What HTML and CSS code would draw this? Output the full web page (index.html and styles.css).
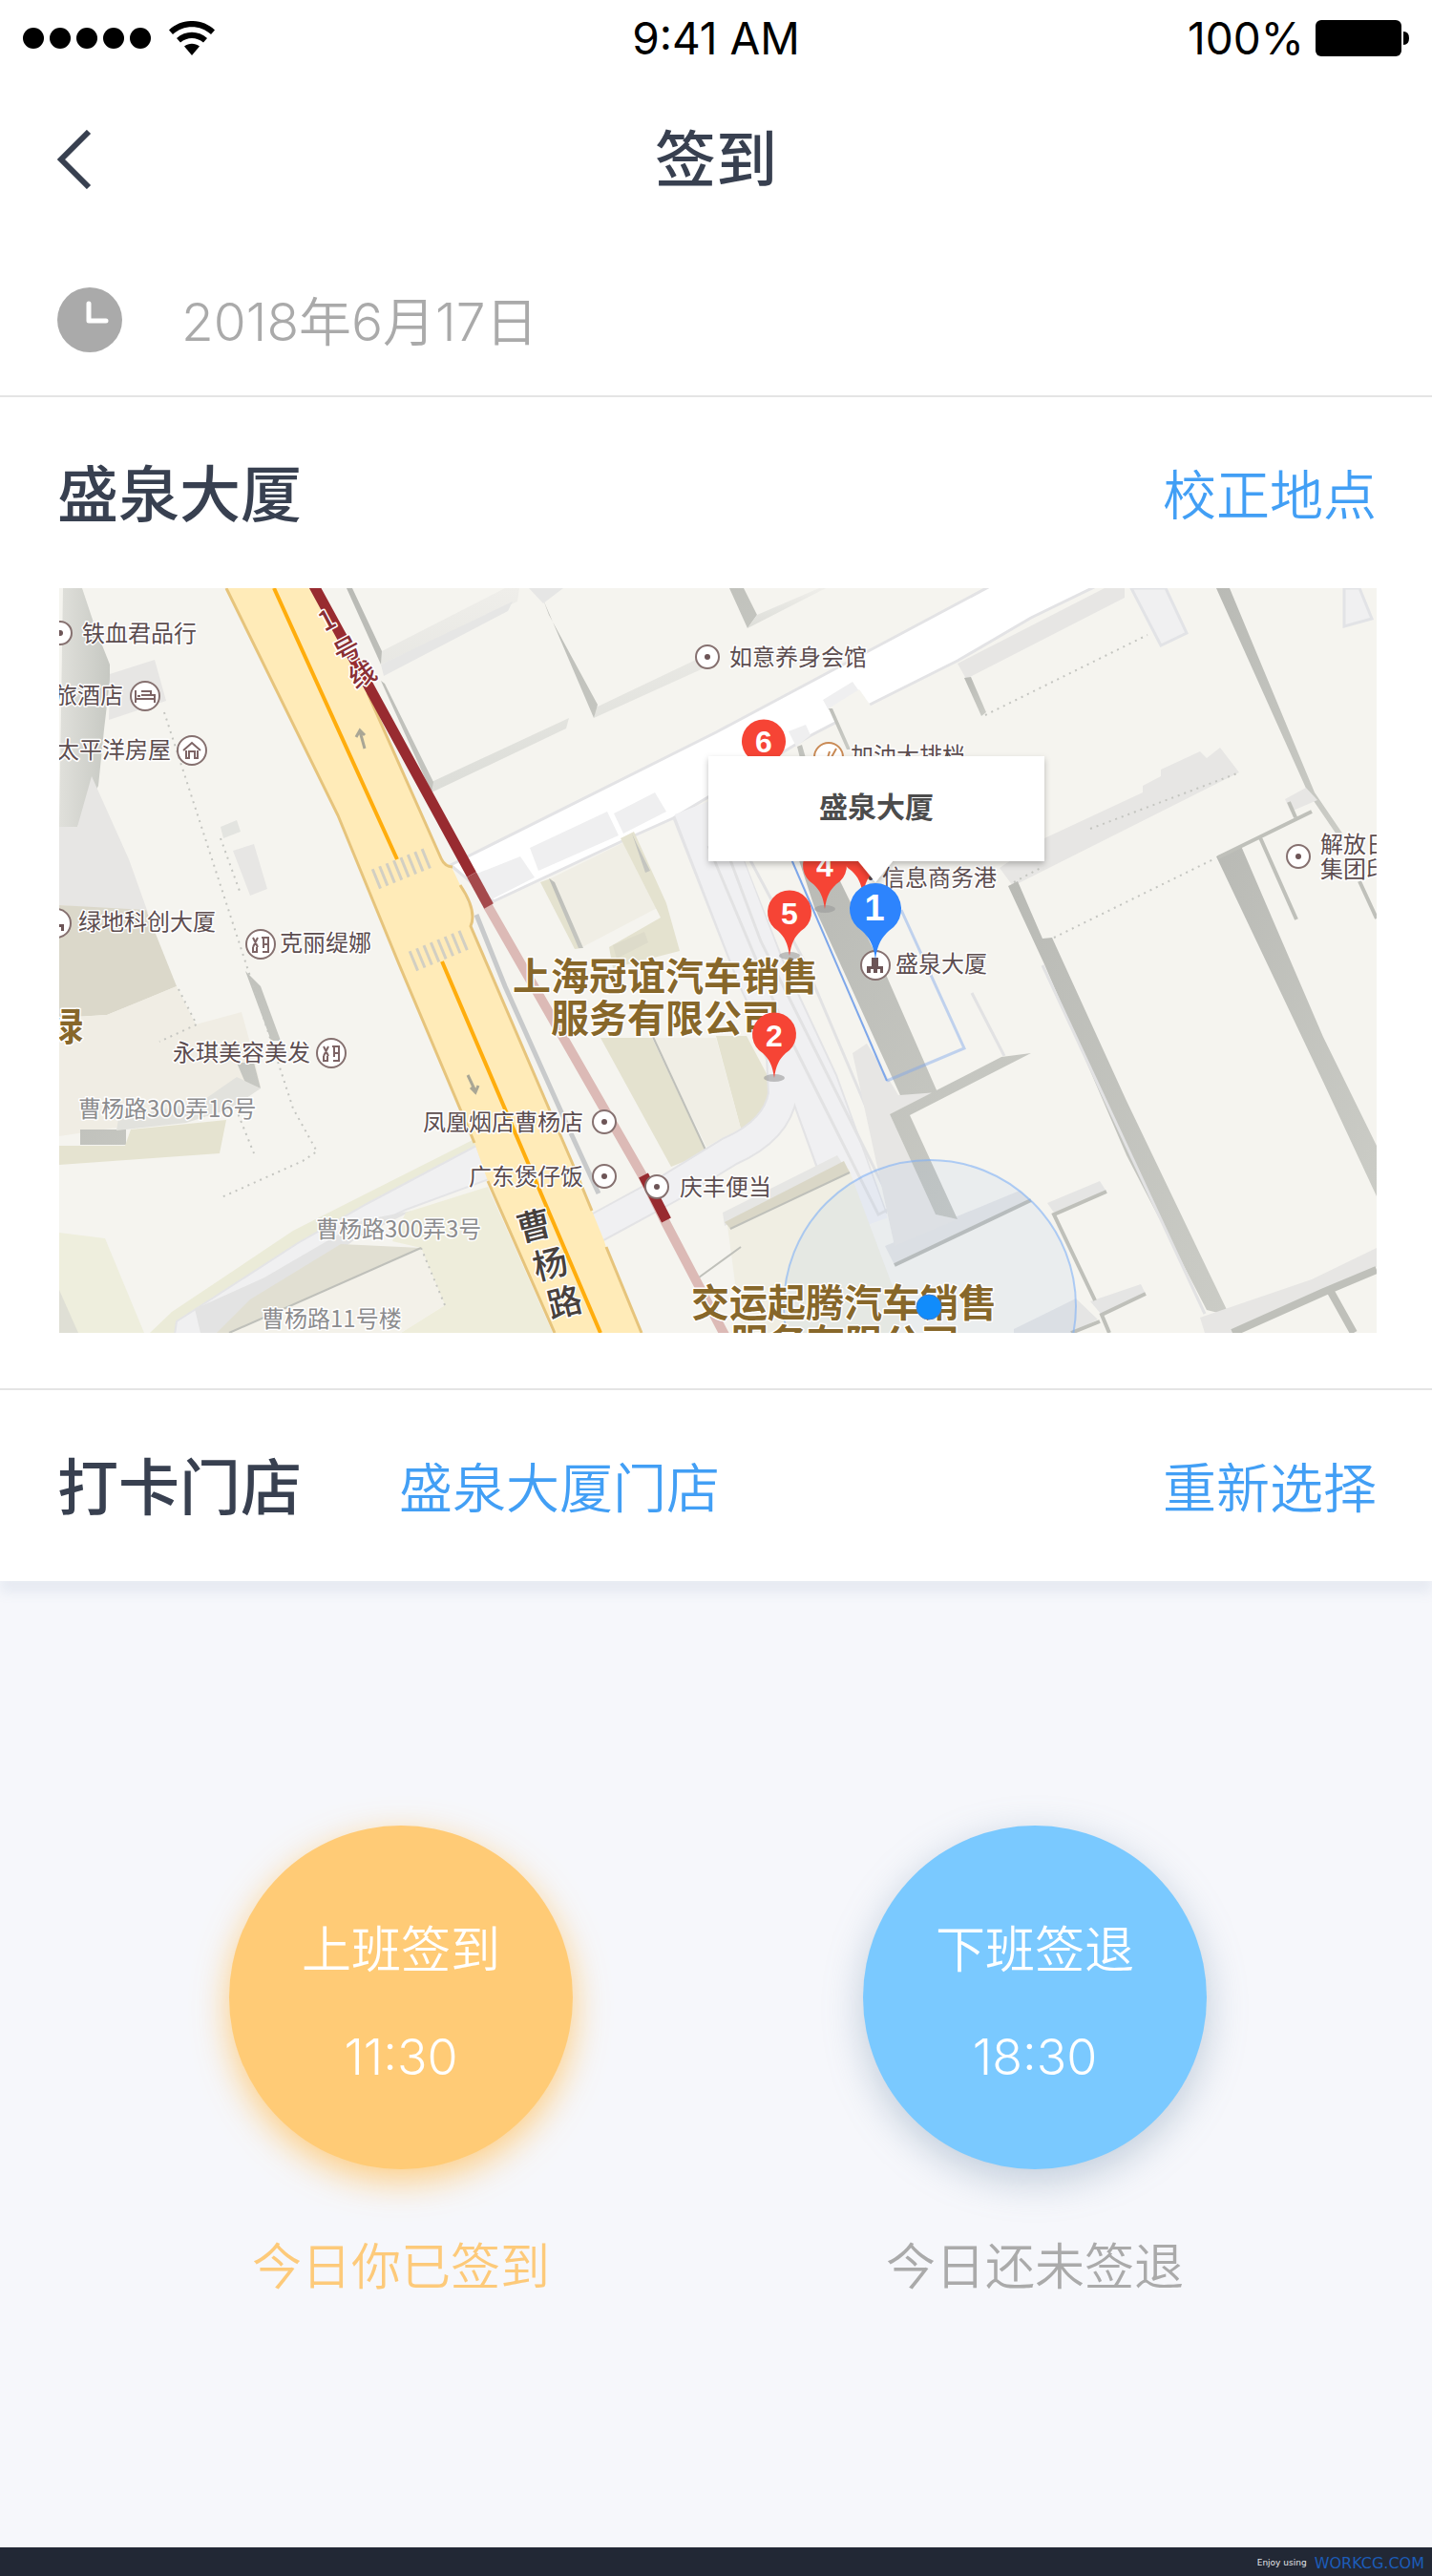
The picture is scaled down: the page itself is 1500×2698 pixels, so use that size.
FILE: index.html
```
<!DOCTYPE html>
<html lang="zh-CN">
<head>
    <meta charset="UTF-8">
    <meta name="viewport" content="width=device-width, initial-scale=1.0">
    <title>签到</title>
    <link rel="stylesheet" href="styles.css">
</head>
<body>

    <!-- Status bar -->
    <div class="status-bar">
        <div class="status-left">
            <span class="signal"><i></i><i></i><i></i><i></i><i></i></span>
            <svg class="wifi" viewBox="0 0 48 36" aria-hidden="true">
                <path d="M0 9.5 C13 -3.2 35 -3.2 48 9.5 L44 14 C33 3.600 15 3.600 4 14 Z"/>
                <path d="M8 18 C17 9.800 31 9.800 40 18 L36 22.500 C29 16.500 19 16.500 12 22.500 Z"/>
                <path d="M16 26.500 C21 22.800 27 22.800 32 26.500 L24 36 Z"/>
            </svg>
        </div>
        <span class="status-time">9:41 AM</span>
        <div class="status-right">
            <span>100%</span>
            <svg class="battery" viewBox="0 0 98 38" aria-hidden="true">
                <rect width="90" height="38" rx="6"/>
                <path d="M92 12 Q98 12 98 19 Q98 26 92 26 Z"/>
            </svg>
        </div>
    </div>

    <header class="nav-bar">
        <button type="button" class="back" aria-label="返回">
            <svg viewBox="0 0 36 62" aria-hidden="true"><path d="M33 2 L4 31 L33 60"/></svg>
        </button>
        <h1>签到</h1>
    </header>

    <main>
        <div class="card">
            <div class="date-row">
                <svg class="clock" viewBox="0 0 68 68" aria-hidden="true">
                    <circle cx="34" cy="34" r="34"/>
                    <path d="M33 17 V35 H51"/>
                </svg>
                <time datetime="2018-06-17">2018年6月17日</time>
            </div>

            <section class="location">
                <div class="row">
                    <h2>盛泉大厦</h2>
                    <a href="#map">校正地点</a>
                </div>

                <svg id="map" class="map" viewBox="0 0 1380 780" role="img" aria-label="地图">
                    <defs>
                        <linearGradient id="shade" x1="0" y1="0" x2="1" y2="0">
                            <stop offset="0" stop-color="#e0e0db"/>
                            <stop offset="1" stop-color="#c6c8c2"/>
                        </linearGradient>
                        <linearGradient id="wall" x1="0" y1="0" x2="1" y2="1">
                            <stop offset="0" stop-color="#b9bab5"/>
                            <stop offset="1" stop-color="#cbccc6"/>
                        </linearGradient>
                        <linearGradient id="soft" x1="0" y1="0" x2="0" y2="1">
                            <stop offset="0" stop-color="#efeeea"/>
                            <stop offset="1" stop-color="#dcddd8"/>
                        </linearGradient>
                        <filter id="drop" x="-10%" y="-10%" width="120%" height="130%">
                            <feDropShadow dx="0" dy="3" stdDeviation="3" flood-opacity=".25"/>
                        </filter>
                        <g id="poi">
                            <circle r="12" class="ring"/>
                            <circle r="3" fill="#6d5557"/>
                        </g>
                        <g id="salon">
                            <circle r="15" class="ring"/>
                            <path class="glyph" d="M-8 -7 L-3 3 M-3 -7 L-8 3 M-8 3 V8 H-4 V3 M1 -7 H8 V8 H2 M2 0 H8 M3 -7 V4"/>
                        </g>
                        <g id="building">
                            <circle r="15" class="ring"/>
                            <path fill="#6d5557" d="M-9 8 V1 H-4 V-8 H3 V1 H8 V8 H5 V4 H2 V8 H-2 V4 H-5 V8 Z"/>
                        </g>
                        <path id="pin" d="M0 46 C-2 32 -5 27 -12 20 A23 23 0 1 1 12 20 C5 27 2 32 0 46 Z"/>
                    </defs>

                    <rect width="1380" height="780" fill="#f5f4ef"/>

                    <!-- West blocks -->
                    <path fill="url(#shade)" d="M4 0 H24 L38 42 L53 80 V97 L47 148 L41 207 L19 250 H0 Z"/>
                    <path fill="#e7e6e4" d="M53 90 L100 75 L112 118 L52 138 Z M0 250 H19 L34 197 L73 284 L93 340 L0 332 Z M182 275 L204 268 L218 315 L200 322 Z"/>
                    <path fill="#e3e4e0" d="M169 250 L186 243 L190 255 L172 262 Z"/>
                    <path fill="#dbd8ca" d="M0 332 L91 337 L123 417 L82 434 L50 447 L0 450 Z"/>
                    <path fill="#f0ede4" d="M0 450 L50 447 L123 417 L143 457 L191 444 L204 491 L211 522 L180 547 L0 574 Z"/>
                    <path fill="url(#wall)" d="M195 401 L211 417 L232 474 H222 Z M186 497 H204 L211 524 L195 518 Z M22 567 H70 V583 H22 Z"/>
                    <path fill="#e2e2dd" d="M211 524 L180 545 L133 560 L60 568 L62 556 L150 537 L186 512 Z"/>
                    <path fill="#e5e3d0" d="M0 584 H69 L75 567 L175 557 L168 592 L0 604 Z"/>
                    <path fill="#eeeedd" d="M0 675 L48 681 L89 780 H0 Z"/>
                    <path fill="#dfdfd5" d="M0 735 L20 780 H0 Z"/>
                    <path class="dots" d="M110 130 L245 545 L270 590 L255 600 L170 638 M169 262 L190 320 M125 420 L144 457 L105 475 M185 545 L204 592"/>

                    <!-- Lane to the south-west -->
                    <path fill="#ebebd8" d="M435 577 L310 640 L245 673 L118 758 L95 780 H140 L440 600 Z"/>
                    <path fill="#f0f0f1" stroke="#e4e4e6" stroke-width="2" d="M437 584 L322 645 L250 686 L123 768 L121 782 H165 L214 734 L318 672 L363 651 L450 619 Z"/>
                    <path fill="#e3e3e3" d="M215 722 L318 662 L370 652 L310 682 L180 780 H148 L142 755 Z"/>
                    <path fill="#eeeddb" d="M449 627 L363 654 L349 684 L379 691 L404 751 L358 780 H517 Z"/>
                    <path fill="#e1dfd2" d="M295 687 L379 691 L180 780 H165 L200 745 Z"/>
                    <path fill="#f3f1e9" d="M379 692 L404 751 L358 780 H180 Z"/>
                    <path class="edge" d="M178 780 L379 691"/>
                    <path class="dots" d="M379 691 L404 751"/>

                    <!-- Northern blocks -->
                    <path fill="url(#soft)" d="M338 66 L467 0 H482 L480 14 L337 80 Z M390 203 L534 136 L531 147 L390 214 Z M562 125 L690 64 L688 78 L560 136 Z"/>
                    <path fill="url(#wall)" d="M301 0 H307 L338 66 L337 80 Z M337 97 L341 100 L392 203 L390 214 Z M507 12 L513 28 L564 122 L560 136 Z M702 0 H717 L731 28 L721 42 Z"/>
                    <path fill="#e6e6e5" d="M492 0 H528 L507 16 Z M337 80 L475 14 L470 24 L340 92 Z"/>
                    <path fill="url(#soft)" d="M731 28 L796 0 H803 L721 42 Z"/>

                    <!-- White avenue -->
                    <path fill="#fff" stroke="#e3e3e5" stroke-width="3" d="M410 290 L688 151 L975 -2 H1086 L1018 31 L941 76 L851 121 L786 155 L643 241 L596 262 L455 328 Z"/>
                    <path fill="#efeff0" d="M493 272 L574 234 L586 259 L502 296 Z M435 300 L483 281 L498 303 L447 329 Z M581 236 L624 214 L636 234 L591 257 Z M800 117 L831 98 L838 108 L806 128 Z M764 150 L782 143 L787 154 L772 166 Z"/>
                    <path fill="#f5f4ef" d="M806 126 L838 106 L866 146 L827 169 Z"/>
                    <path fill="url(#wall)" d="M806 126 L810 126 L829 169 H825 Z M773 166 L778 164 L782 178 H776 Z"/>

                    <!-- Central blocks -->
                    <path fill="#f0eee5" d="M515 304 L600 262 L632 332 L546 377 Z"/>
                    <path fill="#e4e2cf" d="M504 308 L515 304 L548 377 L540 378 Z M588 262 L602 255 L636 330 L650 380 L580 398 L576 376 L630 345 Z"/>
                    <path fill="url(#wall)" d="M513 304 L519 308 L549 377 H544 Z M600 257 L605 268 L619 296 L614 298 Z"/>
                    <path fill="#dddbca" d="M580 374 L613 360 L617 371 L584 388 Z"/>
                    <path fill="#e4e2cf" d="M567 471 H621 L678 591 L641 606 Z M688 469 H720 L747 520 L742 548 L714 566 Z"/>
                    <path fill="#f0eee5" d="M622 471 H688 L714 566 L678 585 Z"/>
                    <path class="edge" d="M622 470 L688 612"/>

                    <!-- Side streets -->
                    <path class="street-line" stroke-width="54" d="M668 232 L736 405 L790 520 L842 664"/>
                    <path class="street-line" stroke-width="32" d="M552 676 L640 628 L702 590 Q752 568 758 530 L756 490 L735 445"/>
                    <path class="street" stroke-width="50" d="M668 228 L736 405 L790 520 L844 668"/>
                    <path class="street" stroke-width="28" d="M546 679 L640 628 L702 590 Q752 568 758 530 L756 490 L732 437"/>
                    <path class="thin" d="M690 250 L735 370 L870 640 M680 270 L760 460 L858 656 L884 643 M700 240 L780 390 L884 635"/>

                    <!-- South blocks -->
                    <path fill="#e6e6e4" d="M695 654 L815 594 L820 602 L697 668 Z"/>
                    <path fill="#f0eee3" d="M700 668 L827 608 L880 750 V780 H715 Z"/>
                    <path fill="#dad7c7" d="M697 664 L822 600 L828 612 L703 671 Z"/>
                    <path class="edge" d="M703 671 L828 612 M670 722 L714 690"/>
                    <path fill="#e5e5e4" d="M865 689 L1006 631 L1018 641 L875 709 Z M1035 644 L1090 621 L1097 632 L1042 654 Z M1080 747 L1133 729 L1138 739 L1092 761 Z M1000 776 L1065 744 L1088 766 L1060 780 H1000 Z"/>
                    <path class="edge thick" d="M875 709 L1018 641 M1097 632 L1042 656 L1085 746 M1138 739 L1092 761 L1100 780 M1090 768 L1060 780"/>

                    <!-- East blocks -->
                    <path fill="#e7e6e4" d="M831 487 L846 477 L879 531 L918 527 L870 551 L918 656 L941 661 L875 689 Z"/>
                    <path fill="url(#wall)" d="M770 270 H800 L867 407 L920 528 L881 531 L791 334 Z M870 551 L987 491 L1018 487 L891 552 L941 661 L918 656 Z"/>
                    <path fill="#e7e6e4" d="M941 79 L1095 0 H1116 V10 L950 95 Z M985 293 L1032 262 L1135 214 V207 L1154 197 V190 L1195 171 L1202 178 L1216 167 L1236 193 L999 312 Z"/>
                    <path fill="url(#wall)" d="M948 94 L955 93 L971 130 L966 134 Z"/>
                    <path fill="#f0f0f1" stroke="#e2e3e6" stroke-width="3" d="M1123 0 L1154 60 L1181 47 L1159 0 Z M1346 0 L1346 40 L1375 32 L1362 0 Z"/>
                    <path class="dots" d="M970 133 L1140 49 M1080 252 L1234 194 M1042 366 L1209 284 M1000 308 L1030 292"/>
                    <path fill="url(#wall)" d="M994 312 L1004 307 L1030 367 L1040 366 L1118 537 L1226 762 L1202 756 L1118 594 L1032 394 Z"/>
                    <path fill="url(#wall)" d="M1212 281 L1238 270 L1324 470 L1380 584 V637 L1324 517 Z"/>
                    <path fill="url(#wall)" d="M1212 0 H1226 L1315 214 L1345 258 H1338 L1308 214 Z"/>
                    <path fill="#e7e6e4" d="M1284 221 L1306 209 L1318 222 L1290 234 Z M1195 764 L1312 724 L1380 691 V711 L1324 736 L1229 780 H1200 Z"/>
                    <path class="edge thick" d="M1214 282 L1312 234 M1288 224 L1295 240 M1257 259 L1296 347 M1362 307 L1380 346"/>
                    <path class="edge heavy" d="M1380 714 L1325 737 L1229 780 M1332 737 L1356 780"/>
                    <path class="thin" d="M956 424 L990 490 M1030 395 L1200 760"/>

                    <!-- Selected outline and accuracy circle -->
                    <path fill="none" stroke="#7ea7ea" stroke-width="2" d="M767 284 L867 516"/>
                    <path fill="none" stroke="#7ea7ea" stroke-opacity=".45" stroke-width="3" d="M867 516 L948 482 L882 337"/>
                    <circle cx="912" cy="752" r="153" fill="#4b8cf2" fill-opacity=".06" stroke="#7fb0f7" stroke-opacity=".6" stroke-width="2"/>

                    <!-- Caoyang road -->
                    <path fill="#ffebb8" d="M175 0 L292 238 L356 394 L435 581 L449 621 L519 780 H610 L574 694 L571 684 L558 652 L537 601 L431 354 L433 341 L420 311 L411 292 L400 283 L323 110 L263 0 Z"/>
                    <path fill="none" stroke="#e6c47c" stroke-width="3" d="M175 0 L292 238 L356 394 L435 581 M449 621 L519 780 M323 110 L400 283 Q404 292 412 292 M420 311 Q438 338 431 354 L537 601 L558 652 M573 690 L610 780"/>
                    <path fill="none" stroke="#ffad0d" stroke-width="4" d="M225 0 L354 284 M401 391 L567 780"/>
                    <path fill="none" stroke="#d2cfc3" stroke-width="22" stroke-dasharray="3 5" d="M331 305 L390 281 M370 391 L428 367"/>
                    <path class="arrow" d="M320 168 L315 150 M311 156 L315 149 L320 154 M428 510 L436 527 M431 523 L436 528 L439 521"/>
                    <path fill="none" stroke="#c8cacb" stroke-width="5" d="M437 342 L467 417 L531 560 L565 634"/>

                    <!-- Metro line -->
                    <path fill="none" stroke="#dcbab6" stroke-width="10" d="M449 333 L612 617 L634 662 L698 784"/>
                    <path fill="none" stroke="#982b30" stroke-width="11" d="M266 -4 L432 300 M612 615 L636 662"/>
                    <path fill="none" stroke="#a54a4c" stroke-width="11" d="M432 300 L450 333"/>

                    <g class="metro-label">
                        <text transform="translate(278 46) rotate(-28)">1</text>
                        <text transform="translate(294 80) rotate(-28)">号</text>
                        <text transform="translate(310 106) rotate(-28)">线</text>
                    </g>
                    <g class="road-label">
                        <text transform="translate(483 685) rotate(-14)">曹</text>
                        <text transform="translate(500 725) rotate(-14)">杨</text>
                        <text transform="translate(515 765) rotate(-14)">路</text>
                    </g>

                    <!-- Places -->
                    <g class="place">
                        <text x="24" y="56">铁血君品行</text>
                        <text x="-5" y="121">旅酒店</text>
                        <text x="-3" y="178">太平洋房屋</text>
                        <text x="702" y="81">如意养身会馆</text>
                        <text x="829" y="184">加油大排档</text>
                        <text x="838" y="312">·信息商务港</text>
                        <text x="876" y="402">盛泉大厦</text>
                        <text x="1321" y="277">解放日</text>
                        <text x="1321" y="303">集团印</text>
                        <text x="20" y="358">绿地科创大厦</text>
                        <text x="231" y="380">克丽缇娜</text>
                        <text x="119" y="495">永琪美容美发</text>
                        <text x="381" y="568">凤凰烟店曹杨店</text>
                        <text x="429" y="625">广东煲仔饭</text>
                        <text x="650" y="636">庆丰便当</text>
                    </g>
                    <g class="place muted">
                        <text x="20" y="554">曹杨路300弄16号</text>
                        <text x="269" y="680">曹杨路300弄3号</text>
                        <text x="212" y="774">曹杨路11号楼</text>
                    </g>
                    <g class="company">
                        <text x="-15" y="474">绿</text>
                        <text x="475" y="421">上海冠谊汽车销售</text>
                        <text x="515" y="465">服务有限公司</text>
                        <text x="662" y="763">交运起腾汽车销售</text>
                        <text x="703" y="805">服务有限公司</text>
                    </g>
                    <use href="#poi" x="1" y="47"/>
                    <use href="#poi" x="679" y="72"/>
                    <use href="#poi" x="1298" y="281"/>
                    <use href="#poi" x="571" y="559"/>
                    <use href="#poi" x="571" y="616"/>
                    <use href="#poi" x="626" y="627"/>
                    <use href="#salon" x="211" y="373"/>
                    <use href="#salon" x="285" y="487"/>
                    <use href="#building" x="-3" y="351"/>
                    <use href="#building" x="855" y="395"/>
                    <g transform="translate(90 113)">
                        <circle r="15" class="ring"/>
                        <path class="glyph" d="M-10 -6 V7 M-10 3 H10 M10 7 V-1 H-4 M-8 0 H-5 M-4 -5 H6 V-1"/>
                    </g>
                    <g transform="translate(139 170)">
                        <circle r="15" class="ring"/>
                        <path class="glyph" d="M-9 0 L0 -8 L9 0 M-6 0 V8 H-3 V1 H3 V8 H6 V0"/>
                    </g>
                    <g transform="translate(806 177)">
                        <circle r="15" class="ring food"/>
                        <path class="glyph food" d="M-2 4 L1 -6 M3 0 L8 -9"/>
                    </g>

                    <!-- Numbered pins -->
                    <g fill="#999" fill-opacity=".6">
                        <ellipse cx="802" cy="336" rx="11" ry="4"/>
                        <ellipse cx="765" cy="385" rx="11" ry="4"/>
                        <ellipse cx="749" cy="513" rx="11" ry="4"/>
                    </g>
                    <g fill="#f64435">
                        <use href="#pin" x="738" y="160"/>
                        <use href="#pin" x="842" y="276"/>
                        <use href="#pin" x="802" y="290"/>
                        <use href="#pin" x="765" y="339"/>
                        <use href="#pin" x="749" y="467"/>
                    </g>
                    <g class="pin-number">
                        <text x="738" y="172">6</text>
                        <text x="802" y="302">4</text>
                        <text x="765" y="352">5</text>
                        <text x="749" y="480">2</text>
                    </g>

                    <path fill="#fff" filter="url(#drop)" d="M680 176 H1032 V286 H873 L855 308 L837 286 H680 Z"/>
                    <text class="callout" x="856" y="240">盛泉大厦</text>

                    <path fill="#2d84fd" d="M855 389 C853 372 848 366 841 359 A27 27 0 1 1 869 359 C862 366 857 372 855 389 Z"/>
                    <text class="pin-number large" x="854" y="348">1</text>
                    <circle cx="911" cy="753" r="13" fill="#118cfb" stroke="#3d7fd0" stroke-width="1"/>
                </svg>
            </section>

            <section class="row store">
                <h2>打卡门店</h2>
                <a href="#store" id="store">盛泉大厦门店</a>
                <a href="#store" class="reselect">重新选择</a>
            </section>
        </div>

        <section class="punch">
            <div class="punch-item punch-in">
                <button type="button"><span>上班签到</span><span>11:30</span></button>
                <p>今日你已签到</p>
            </div>
            <div class="punch-item punch-out">
                <button type="button"><span>下班签退</span><span>18:30</span></button>
                <p>今日还未签退</p>
            </div>
        </section>
    </main>

    <footer>
        <span>Enjoy using</span>
        <a href="#">WORKCG.COM</a>
    </footer>

</body>
</html>
```

FILE: styles.css
```
* {
    box-sizing: border-box;
}

body {
    font-family: Inter, "Noto Sans CJK SC", sans-serif;
    background-color: #f6f7fb;
    color: #384050;
    margin: 0;
    min-height: 100vh;
    display: flex;
    flex-direction: column;
}

h1, h2, p {
    margin: 0;
    font-weight: 500;
}

h1, h2 {
    font-size: 64px;
    line-height: 92px;
}

h2 {
    padding-top: 3px;
}

a {
    color: #429ff5;
    text-decoration: none;
}

button {
    border: none;
    background: none;
    padding: 0;
    font-family: inherit;
    cursor: pointer;
}

/* Status bar */
.status-bar {
    display: grid;
    grid-template-columns: 1fr auto 1fr;
    align-items: center;
    height: 78px;
    padding: 0 24px;
    background-color: #fff;
    color: #000;
    font-size: 46px;
    line-height: 80px;
}

.status-left, .status-right {
    display: flex;
    align-items: center;
}

.status-left {
    gap: 19px;
}

.status-right {
    justify-content: flex-end;
    gap: 12px;
}

.signal {
    display: flex;
    gap: 6px;
}

.signal i {
    width: 22px;
    height: 22px;
    border-radius: 50%;
    background-color: #000;
}

.wifi {
    width: 48px;
    height: 36px;
}

.battery {
    width: 98px;
    height: 38px;
}

/* Title bar */
.nav-bar {
    display: grid;
    grid-template-columns: 1fr auto 1fr;
    align-items: center;
    height: 178px;
    padding: 0 60px;
    background-color: #fff;
}

.back {
    justify-self: start;
    width: 36px;
    height: 62px;
}

.back svg {
    display: block;
    fill: none;
    stroke: #384050;
    stroke-width: 6;
}

main {
    flex: 1;
}

.card {
    background-color: #fff;
    box-shadow: 0 12px 12px rgba(120, 150, 180, 0.12);
}

.date-row {
    display: flex;
    align-items: center;
    gap: 62px;
    height: 160px;
    padding: 0 60px;
    border-bottom: 2px solid #e4e4e4;
    color: #aaa;
    font-size: 55px;
    font-weight: 350;
}

.date-row time {
    padding-bottom: 4px;
}

.clock {
    width: 68px;
    height: 68px;
    fill: #aaa;
}

.clock path {
    fill: none;
    stroke: #fff;
    stroke-width: 5;
    stroke-linecap: round;
    stroke-linejoin: round;
}

.row {
    display: flex;
    align-items: center;
    justify-content: space-between;
    height: 200px;
}

.row a {
    padding-bottom: 4px;
    font-size: 56px;
    font-weight: 350;
}

.location {
    padding: 0 58px 58px 60px;
    border-bottom: 2px solid #e4e4e4;
}

.store {
    padding: 0 58px 0 60px;
    justify-content: flex-start;
    gap: 102px;
}

.reselect {
    margin-left: auto;
}

/* Map */
.map {
    display: block;
    width: calc(100% - 2px);
    margin-left: 2px;
    overflow: hidden;
    font-family: "Noto Sans CJK SC", sans-serif;
}

.map text {
    paint-order: stroke;
    stroke: #fff;
    stroke-width: 3px;
    stroke-linejoin: round;
}

.map .place {
    font-size: 24px;
    fill: #5c4d4f;
}

.map .muted {
    fill: #8c8c8e;
}

.map .company {
    font-size: 40px;
    font-weight: 700;
    fill: #87672a;
}

.map .metro-label {
    font-size: 28px;
    font-weight: 500;
    fill: #8a3035;
}

.map .road-label {
    font-size: 36px;
    font-weight: 500;
    fill: #48413d;
}

.map .callout {
    font-size: 30px;
    font-weight: 700;
    fill: #4c4c4c;
    text-anchor: middle;
}

.map .pin-number, .map .pin-number text {
    font-family: "Liberation Sans", sans-serif;
    font-size: 32px;
    font-weight: 700;
    fill: #fff;
    stroke: none;
    text-anchor: middle;
}

.map .pin-number.large {
    font-size: 38px;
}

.ring {
    fill: #fff;
    stroke: #85706f;
    stroke-width: 2;
}

.glyph {
    fill: none;
    stroke: #7d6465;
    stroke-width: 2;
}

.food {
    stroke: #c98a55;
}

.street, .street-line, .thin, .edge, .dots, .arrow {
    fill: none;
}

.street {
    stroke: #f0f0f2;
}

.street-line {
    stroke: #e3e3e5;
}

.thin {
    stroke: #e2e2e3;
    stroke-width: 3;
}

.edge {
    stroke: #bfc0ba;
    stroke-width: 2;
}

.edge.thick {
    stroke-width: 4;
}

.edge.heavy {
    stroke-width: 8;
}

.dots {
    stroke: #c4c5c0;
    stroke-width: 2;
    stroke-dasharray: 2 5;
}

.arrow {
    stroke: #a9a695;
    stroke-width: 3;
}

/* Punch buttons */
.punch {
    display: flex;
    justify-content: space-between;
    padding: 256px 236px 120px 240px;
}

.punch-item {
    display: flex;
    flex-direction: column;
    align-items: center;
    gap: 64px;
    font-size: 52px;
}

.punch-item button {
    display: flex;
    flex-direction: column;
    align-items: center;
    justify-content: center;
    width: 360px;
    height: 360px;
    padding-top: 14px;
    border-radius: 50%;
    color: #fff;
    font-size: 52px;
    font-weight: 350;
    line-height: 112px;
}

.punch-item p {
    font-weight: 350;
    line-height: 78px;
}

.punch-in button {
    background-color: #ffcb76;
    box-shadow: 0 12px 36px rgba(255, 195, 100, 0.8);
}

.punch-in p {
    color: #fdca7a;
}

.punch-out button {
    background-color: #7ac9ff;
    box-shadow: 0 12px 40px rgba(110, 140, 170, 0.4);
}

.punch-out p {
    color: #aaa;
}

footer {
    display: flex;
    align-items: center;
    justify-content: flex-end;
    gap: 8px;
    height: 30px;
    padding: 2px 8px 0;
    background-color: #222835;
    color: #e4e6ea;
    font-family: "DejaVu Sans", sans-serif;
    font-size: 9px;
}

footer a {
    color: #1c5cb8;
    font-size: 16px;
}
```
